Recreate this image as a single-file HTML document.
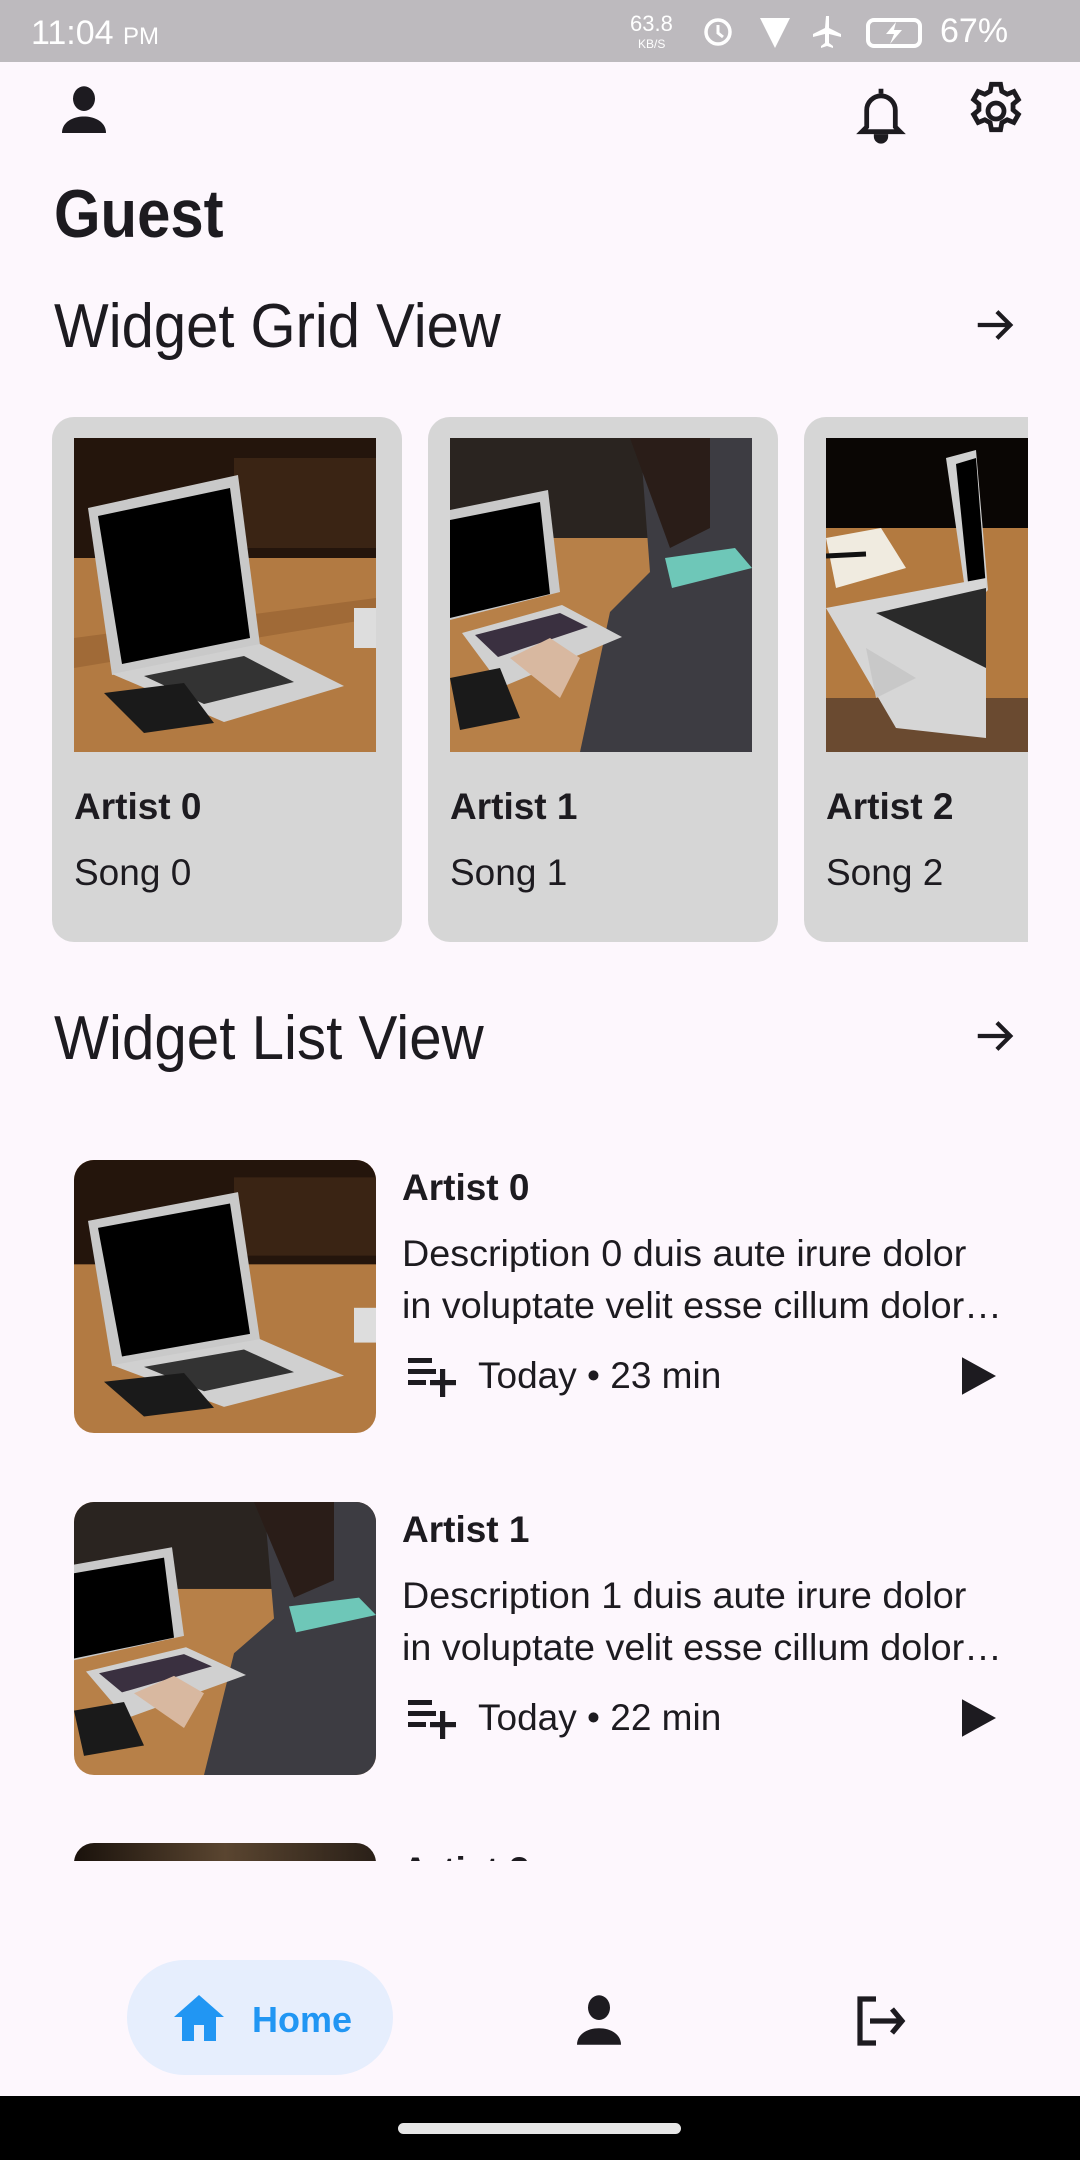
<!DOCTYPE html>
<html><head><meta charset="utf-8"><style>
*{margin:0;padding:0;box-sizing:border-box}
body{width:1080px;height:2160px;background:#fdf7fd;position:relative;overflow:hidden;font-family:"Liberation Sans",sans-serif;color:#1d1b20}
.a{position:absolute}
.t{position:absolute;white-space:nowrap;line-height:1}
.card{position:absolute;top:417px;width:350px;height:525px;background:#d6d6d6;border-radius:22px;overflow:hidden}
.card .img{position:absolute;left:22px;top:21px;width:302px;height:314px;overflow:hidden}
.card .n{position:absolute;left:22px;top:371px;font-size:37px;font-weight:bold;line-height:1}
.card .s{position:absolute;left:22px;top:437px;font-size:37px;line-height:1}
.li{position:absolute;left:0;width:1080px;height:300px}
.li .img{position:absolute;left:74px;top:0;width:302px;height:273px;border-radius:20px;overflow:hidden}
.desc{font-size:37px;width:605px;overflow:hidden;text-overflow:ellipsis;transform:scaleX(1.02);transform-origin:left}
</style></head><body>
<!-- status bar -->
<div class="a" style="left:0;top:0;width:1080px;height:62px;background:#bdbabe"></div>
<div class="t" style="left:31px;top:16px;font-size:34px;color:#fff">11:04 <span style="font-size:24px">PM</span></div>
<div class="t" style="left:630px;top:13px;font-size:22px;color:#fff">63.8</div>
<div class="t" style="left:638px;top:38px;font-size:12px;color:#fff">KB/S</div>
<svg class="a" style="left:700px;top:12px" width="320" height="40" viewBox="0 0 320 40" fill="#fff">
<circle cx="18" cy="20" r="12" fill="none" stroke="#fff" stroke-width="3.5"/><path d="M18 13v8l5 4" stroke="#fff" stroke-width="3" fill="none"/>
<path d="M60 6h30l-15 30z"/>
<path d="M126 4l3 0 0 12 12 6 0 3-12-3 0 9 4 3 0 2-6-2-6 2 0-2 4-3 0-9-12 3 0-3 12-6z"/>
<rect x="168" y="8" width="52" height="26" rx="6" fill="none" stroke="#fff" stroke-width="4"/><path d="M196 10l-10 12h8l-4 10 12-14h-8z"/>
</svg>
<div class="t" style="left:940px;top:14px;font-size:34px;color:#fff">67%</div>

<!-- top icons -->
<svg class="a" style="left:51px;top:78px" width="66" height="66" viewBox="0 0 24 24" fill="#1d1b20"><ellipse cx="12" cy="7.5" rx="4" ry="4.5"/><path d="M4 20c0-4 4-6 8-6s8 2 8 6z"/></svg>
<svg class="a" style="left:852px;top:84px" width="58" height="62" viewBox="0 0 24 26" fill="none" stroke="#1d1b20" stroke-width="2"><path d="M12 2v2M6 18V11a6 6 0 0 1 12 0v7l2 2H4z"/><path d="M10 22a2 2 0 0 0 4 0z" fill="#1d1b20"/></svg>
<svg class="a" style="left:964px;top:79px" width="64" height="64" viewBox="0 0 24 24" fill="none" stroke="#1d1b20" stroke-width="1.8"><circle cx="12" cy="12" r="3"/><path d="M10.3 2h3.4l.5 2.6 2 1.1 2.5-1 1.7 3-2 1.7v2.2l2 1.7-1.7 3-2.5-1-2 1.1-.5 2.6h-3.4l-.5-2.6-2-1.1-2.5 1-1.7-3 2-1.7v-2.2l-2-1.7 1.7-3 2.5 1 2-1.1z"/></svg>

<div class="t" style="left:54px;top:180px;font-size:68px;font-weight:bold;transform:scaleX(.88);transform-origin:left">Guest</div>
<div class="t" style="left:54px;top:296px;font-size:62px;transform:scaleX(.935);transform-origin:left">Widget Grid View</div>
<svg class="a" style="left:972px;top:302px" width="46" height="46" viewBox="0 0 24 24" fill="none" stroke="#1d1b20" stroke-width="2.2"><path d="M3 12h17M13 5l7 7-7 7"/></svg>

<!-- grid cards -->
<div class="card" style="left:52px"><div class="img">
<svg width="302" height="314" viewBox="0 0 302 314"><rect width="302" height="314" fill="#b27a42"/><rect width="302" height="120" fill="#24150c"/><path d="M160 20h142v90H160z" fill="#3a2414"/><path d="M0 200l302-40v20L0 230z" fill="#8e5a2c" opacity=".5"/>
<path d="M14 70l150-33 22 170-148 30z" fill="#c9c9c9"/><path d="M24 78l132-28 20 150-128 26z" fill="#000"/>
<path d="M38 236l148-30 84 42-120 36z" fill="#d0d0d0"/><path d="M70 238l100-20 50 26-90 22z" fill="#333"/>
<path d="M30 255l80-10 30 40-70 10z" fill="#1a1a1a"/><rect x="280" y="170" width="22" height="40" fill="#ddd"/></svg></div>
<div class="n">Artist 0</div><div class="s">Song 0</div></div>

<div class="card" style="left:428px"><div class="img">
<svg width="302" height="314" viewBox="0 0 302 314"><rect width="302" height="314" fill="#b78048"/><rect width="302" height="100" fill="#2a2420"/><path d="M190 0h112v314H130l30-140 40-40z" fill="#3d3c42"/><path d="M180 0h80v90l-40 20z" fill="#2a1d18"/><path d="M215 120l70-10 17 20-80 20z" fill="#6ec7b8"/>
<path d="M0 72l98-20 12 102-110 28z" fill="#c9c9c9"/><path d="M0 82l90-18 10 92-100 24z" fill="#000"/>
<path d="M12 195l100-28 60 32-120 50z" fill="#d0d0d0"/><path d="M25 197l85-22 28 14-90 30z" fill="#3a3040"/>
<path d="M0 240l50-10 20 50-60 12z" fill="#1a1a1a"/><path d="M60 220l40-20 30 20-20 40z" fill="#d8b8a0"/></svg></div>
<div class="n">Artist 1</div><div class="s">Song 1</div></div>

<div class="card" style="left:804px;width:224px;border-radius:22px 0 0 22px"><div class="img">
<svg width="302" height="314" viewBox="0 0 302 314"><rect width="302" height="314" fill="#b37a40"/><rect width="302" height="90" fill="#0a0604"/><path d="M0 260h302v54H0z" fill="#6a4a30"/>
<path d="M0 100l55-10 25 40-70 20z" fill="#f0ebe0"/><path d="M0 118l40-2" stroke="#111" stroke-width="5"/>
<path d="M120 20l30-8 12 140-20 20z" fill="#d0d0d0"/><path d="M130 26l20-6 10 130-16 14z" fill="#000"/>
<path d="M0 170l160-30 0 160-90-10z" fill="#d6d6d6"/><path d="M50 175l110-25 0 80-60-30z" fill="#2a2a2a"/><path d="M40 210l50 30-40 20z" fill="#c8c8c8"/></svg></div>
<div class="n">Artist 2</div><div class="s">Song 2</div></div>

<div class="t" style="left:54px;top:1008px;font-size:62px;transform:scaleX(.94);transform-origin:left">Widget List View</div>
<svg class="a" style="left:972px;top:1013px" width="46" height="46" viewBox="0 0 24 24" fill="none" stroke="#1d1b20" stroke-width="2.2"><path d="M3 12h17M13 5l7 7-7 7"/></svg>

<!-- list items -->
<div class="li" style="top:1160px">
<div class="img"><svg width="302" height="273" viewBox="0 0 302 314" preserveAspectRatio="none"><rect width="302" height="314" fill="#b27a42"/><rect width="302" height="120" fill="#24150c"/><path d="M160 20h142v90H160z" fill="#3a2414"/>
<path d="M14 70l150-33 22 170-148 30z" fill="#c9c9c9"/><path d="M24 78l132-28 20 150-128 26z" fill="#000"/>
<path d="M38 236l148-30 84 42-120 36z" fill="#d0d0d0"/><path d="M70 238l100-20 50 26-90 22z" fill="#333"/>
<path d="M30 255l80-10 30 40-70 10z" fill="#1a1a1a"/><rect x="280" y="170" width="22" height="40" fill="#ddd"/></svg></div>
<div class="t" style="left:402px;top:9px;font-size:37px;font-weight:bold">Artist 0</div>
<div class="t desc" style="left:402px;top:75px">Description 0 duis aute irure dolor</div>
<div class="t desc" style="left:402px;top:127px">in voluptate velit esse cillum dolore eu fugiat</div>
<svg class="a" style="left:408px;top:196px" width="52" height="42" viewBox="0 0 26 21" fill="#1d1b20"><rect x="0" y="1" width="12" height="2.5"/><rect x="0" y="6.5" width="14" height="2.5"/><rect x="0" y="12" width="9" height="2.5"/><rect x="16" y="6.5" width="2.6" height="14"/><rect x="11" y="12" width="13" height="2.6"/></svg>
<div class="t" style="left:478px;top:197px;font-size:37px">Today • 23 min</div>
<svg class="a" style="left:962px;top:197px" width="34" height="38" viewBox="0 0 10 11"><path d="M0 0l10 5.5L0 11z" fill="#1d1b20"/></svg>
</div>

<div class="li" style="top:1502px">
<div class="img"><svg width="302" height="273" viewBox="0 0 302 314" preserveAspectRatio="none"><rect width="302" height="314" fill="#b78048"/><rect width="302" height="100" fill="#2a2420"/><path d="M190 0h112v314H130l30-140 40-40z" fill="#3d3c42"/><path d="M180 0h80v90l-40 20z" fill="#2a1d18"/><path d="M215 120l70-10 17 20-80 20z" fill="#6ec7b8"/>
<path d="M0 72l98-20 12 102-110 28z" fill="#c9c9c9"/><path d="M0 82l90-18 10 92-100 24z" fill="#000"/>
<path d="M12 195l100-28 60 32-120 50z" fill="#d0d0d0"/><path d="M25 197l85-22 28 14-90 30z" fill="#3a3040"/>
<path d="M0 240l50-10 20 50-60 12z" fill="#1a1a1a"/><path d="M60 220l40-20 30 20-20 40z" fill="#d8b8a0"/></svg></div>
<div class="t" style="left:402px;top:9px;font-size:37px;font-weight:bold">Artist 1</div>
<div class="t desc" style="left:402px;top:75px">Description 1 duis aute irure dolor</div>
<div class="t desc" style="left:402px;top:127px">in voluptate velit esse cillum dolore eu fugiat</div>
<svg class="a" style="left:408px;top:196px" width="52" height="42" viewBox="0 0 26 21" fill="#1d1b20"><rect x="0" y="1" width="12" height="2.5"/><rect x="0" y="6.5" width="14" height="2.5"/><rect x="0" y="12" width="9" height="2.5"/><rect x="16" y="6.5" width="2.6" height="14"/><rect x="11" y="12" width="13" height="2.6"/></svg>
<div class="t" style="left:478px;top:197px;font-size:37px">Today • 22 min</div>
<svg class="a" style="left:962px;top:197px" width="34" height="38" viewBox="0 0 10 11"><path d="M0 0l10 5.5L0 11z" fill="#1d1b20"/></svg>
</div>

<div class="a" style="left:0;top:1843px;width:1080px;height:18px;overflow:hidden">
<div class="a" style="left:74px;top:0;width:302px;height:40px;border-radius:20px;background:linear-gradient(90deg,#1a120c,#5a4530 50%,#2a2018)"></div>
<div class="t" style="left:402px;top:9px;font-size:37px;font-weight:bold">Artist 2</div>
</div>

<!-- bottom nav -->
<div class="a" style="left:127px;top:1960px;width:266px;height:115px;border-radius:58px;background:#e6eefd"></div>
<svg class="a" style="left:172px;top:1995px" width="54" height="46" viewBox="0 0 27 23" fill="#2196f3"><path d="M13.5 0L26 11h-4v12h-6v-8h-5v8H5V11H1z"/></svg>
<div class="t" style="left:252px;top:2002px;font-size:36px;font-weight:bold;color:#2196f3">Home</div>
<svg class="a" style="left:566px;top:1987px" width="66" height="66" viewBox="0 0 24 24" fill="#1d1b20"><ellipse cx="12" cy="7.5" rx="4" ry="4.5"/><path d="M4 21c0-4 4-6 8-6s8 2 8 6z"/></svg>
<svg class="a" style="left:852px;top:1995px" width="56" height="52" viewBox="0 0 28 26" fill="none" stroke="#1d1b20" stroke-width="2.6"><path d="M12 2H4v22h8M9 13h16M20 7l5 6-5 6"/></svg>

<div class="a" style="left:0;top:2096px;width:1080px;height:64px;background:#000"></div>
<div class="a" style="left:398px;top:2123px;width:283px;height:11px;border-radius:6px;background:#e6e6e6"></div>
</body></html>
